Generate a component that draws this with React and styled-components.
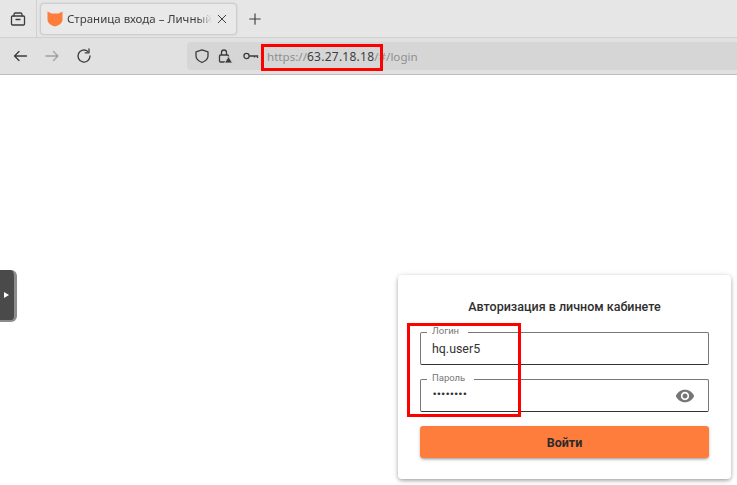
import React from 'react';
import styled, { createGlobalStyle } from 'styled-components';

const GlobalStyle = createGlobalStyle`
	html, body {
		margin: 0;
		padding: 0;
		background: #fff;
		overflow: hidden;
	}
	body {
		font-family: "Noto Sans", sans-serif;
	}
`;

const Page = styled.div`
	position: relative;
	width: 737px;
	height: 485px;
	overflow: hidden;
	display: flex;
	flex-direction: column;
`;

const TabStrip = styled.div`
	height: 38px;
	display: flex;
	align-items: center;
	background: #e6e6e6;
	box-sizing: border-box;
	border-bottom: 1px solid #cfcfcf;
`;

const SideSlot = styled.div`
	width: 37px;
	height: 37px;
	flex: none;
	box-sizing: border-box;
	display: flex;
	align-items: center;
	justify-content: center;
	border-right: 1px solid #cfcfcf;
	color: #3c3c3c;
`;

const Tab = styled.div`
	width: 197px;
	height: 32px;
	margin-left: 3px;
	padding: 0 8px 0 6px;
	box-sizing: border-box;
	display: flex;
	align-items: center;
	gap: 4px;
	background: #e9e9e9;
	border: 1px solid #cdcdcd;
	border-radius: 4px;
	box-shadow: 0 0 2px rgba(0, 0, 0, 0.15);
`;

const TabTitle = styled.span`
	flex: 1;
	font-size: 11.5px;
	color: #3d3d3d;
	white-space: nowrap;
	overflow: hidden;
	-webkit-mask-image: linear-gradient(to right, #000 90%, transparent);
	mask-image: linear-gradient(to right, #000 90%, transparent);
`;

const PlainIcon = styled.span`
	display: flex;
	flex: none;
	margin-left: ${(props) => props.$left || 0}px;
	color: ${(props) => props.$color || '#3c3c3c'};
`;

const Toolbar = styled.div`
	height: 37px;
	display: flex;
	align-items: center;
	background: #e1e1e1;
	box-sizing: border-box;
	border-bottom: 1px solid #bdbdbd;
	padding-left: 12px;
`;

const NavIcons = styled.div`
	width: 175px;
	flex: none;
	display: flex;
	align-items: center;
	gap: 16px;
`;

const UrlBar = styled.div`
	flex: 1;
	height: 28px;
	display: flex;
	align-items: center;
	background: #d6d6d6;
	border-radius: 4px 0 0 4px;
	padding-left: 7px;
`;

const UrlText = styled.span`
	margin-left: 7px;
	font-size: 11.6px;
	color: #8f8f8f;
	white-space: nowrap;
`;

const UrlHost = styled.span`
	font-size: 12px;
	color: #3f3f3f;
	letter-spacing: 0.25px;
`;

const Content = styled.main`
	flex: 1;
	display: flex;
	justify-content: flex-end;
	align-items: flex-start;
	padding: 200px 6px 0 0;
	background: #fff;
`;

const Card = styled.form`
	width: 333px;
	height: 204px;
	box-sizing: border-box;
	padding: 24px 22px 0;
	background: #fff;
	border-radius: 4px;
	box-shadow: 0 2px 4px -1px rgba(0, 0, 0, 0.3), 0 1px 5px rgba(0, 0, 0, 0.14), 0 1px 10px rgba(0, 0, 0, 0.06);
`;

const Title = styled.div`
	font-family: Roboto, sans-serif;
	font-weight: 500;
	font-size: 12.5px;
	line-height: 16px;
	text-align: center;
	color: #2f2f2f;
	margin-bottom: 17px;
`;

const Field = styled.div`
	position: relative;
	height: 33px;
	box-sizing: border-box;
	margin-bottom: 14px;
	padding: 0 13px 0 11px;
	display: flex;
	align-items: center;
	justify-content: space-between;
	border: 1px solid #777;
	border-bottom-color: #333;
	border-radius: 2px;
	font-family: Roboto, sans-serif;
	font-size: 12.4px;
	color: #333;
`;

const Legend = styled.span`
	position: absolute;
	left: 6px;
	top: -8px;
	padding: 0 9px 0 5px;
	background: #fff;
	font-size: 9.5px;
	line-height: 12px;
	color: #777;
`;

const Dots = styled.span`
	font-size: 9px;
	letter-spacing: -1px;
	margin-top: -3px;
	font-family: "DejaVu Sans", sans-serif;
	color: #333;
`;

const SubmitButton = styled.button`
	display: block;
	width: 100%;
	height: 32px;
	border: 0;
	border-radius: 3px;
	background: #ff7d3c;
	box-shadow: 0 2px 3px -1px rgba(0, 0, 0, 0.35), 0 1px 4px rgba(0, 0, 0, 0.12);
	font-family: Roboto, sans-serif;
	font-weight: 700;
	font-size: 12.5px;
	color: #2b2b2b;
`;

const Handle = styled.div`
	position: absolute;
	left: 0;
	top: 270px;
	width: 14px;
	height: 50px;
	display: flex;
	align-items: center;
	background: #4a4a4a;
	border-right: 3px solid #8c8c8c;
	border-bottom: 2px solid #8c8c8c;
	border-radius: 0 6px 6px 0;
`;

const HandleArrow = styled.i`
	width: 0;
	height: 0;
	margin-left: 4px;
	border-left: 5px solid #fff;
	border-top: 3px solid transparent;
	border-bottom: 3px solid transparent;
`;

const Mark = styled.div`
	position: absolute;
	left: ${(props) => props.$x}px;
	top: ${(props) => props.$y}px;
	width: ${(props) => props.$w}px;
	height: ${(props) => props.$h}px;
	box-sizing: border-box;
	border: 3px solid #f00;
	pointer-events: none;
`;

const Stroke = ({ size = 16, children }) => (
	<svg width={size} height={size} viewBox="0 0 16 16" fill="none" stroke="currentColor" strokeWidth="1.3" strokeLinecap="round" strokeLinejoin="round">
		{children}
	</svg>
);

const App = () => (
	<Page>
		<GlobalStyle />
		<TabStrip>
			<SideSlot>
				<Stroke>
					<path d="M4 5V3.500A1.500 1.500 0 0 1 5.500 2h5A1.500 1.500 0 0 1 12 3.500V5" />
					<rect x="1.500" y="5" width="13" height="9" rx="1" />
					<path d="M6 8.500h4" />
				</Stroke>
			</SideSlot>
			<Tab>
				<svg width="16" height="16" viewBox="0 0 16 16" fill="#ff7d3c">
					<path d="M0.500 0.500 L4.500 2.500 H11.500 L15.500 0.500 V8.500 C15.500 12 12 14.500 8 15.500 C4 14.500 0.500 12 0.500 8.500 Z" />
				</svg>
				<TabTitle>Страница входа – Личный кабинет</TabTitle>
				<PlainIcon>
					<Stroke size={12}>
						<path d="M3 3l10 10M13 3L3 13" />
					</Stroke>
				</PlainIcon>
			</Tab>
			<PlainIcon $left={11}>
				<Stroke size={14}>
					<path d="M8 2v12M2 8h12" />
				</Stroke>
			</PlainIcon>
		</TabStrip>
		<Toolbar>
			<NavIcons>
				<PlainIcon>
					<Stroke>
						<path d="M14.500 8H2.500M7 3.500L2.500 8 7 12.500" />
					</Stroke>
				</PlainIcon>
				<PlainIcon $color="#a0a0a0">
					<Stroke>
						<path d="M2 8h12M9.500 3.500L14 8 9.500 12.500" />
					</Stroke>
				</PlainIcon>
				<PlainIcon>
					<Stroke>
						<path d="M14 8A6 6 0 1 1 11.800 3.400" />
						<path d="M13 1v3.800H9.200" />
					</Stroke>
				</PlainIcon>
			</NavIcons>
			<UrlBar>
				<PlainIcon>
					<Stroke>
						<path d="M8 1.800l6 2V8c0 3-2.500 5-6 6.500C4.500 13 2 11 2 8V3.800z" />
					</Stroke>
				</PlainIcon>
				<PlainIcon $left={7}>
					<svg width="16" height="16" viewBox="0 0 16 16" fill="none" stroke="currentColor" strokeWidth="1.3">
						<rect x="2.500" y="7" width="9" height="7" rx="1" />
						<path d="M4.500 7V4.500a2.500 2.500 0 0 1 5 0V7" />
						<path d="M11.500 8.500l4 6.500h-8z" fill="#3c3c3c" stroke="#d6d6d6" strokeWidth="0.8" />
					</svg>
				</PlainIcon>
				<PlainIcon $left={9}>
					<svg width="18" height="16" viewBox="0 0 18 16" fill="none" stroke="currentColor" strokeWidth="1.3">
						<circle cx="4.500" cy="8" r="2.600" />
						<path d="M7.100 8H15.500v2M12.500 8v1.500" />
					</svg>
				</PlainIcon>
				<UrlText>
					https://<UrlHost>63.27.18.18</UrlHost>/#/login
				</UrlText>
			</UrlBar>
		</Toolbar>
		<Content>
			<Card>
				<Title>Авторизация в личном кабинете</Title>
				<Field>
					<Legend>Логин</Legend>
					hq.user5
				</Field>
				<Field>
					<Legend>Пароль</Legend>
					<Dots>••••••••</Dots>
					<svg width="20" height="20" viewBox="0 0 24 24" fill="#757575">
						<path d="M12 4.500C7 4.500 2.730 7.610 1 12c1.730 4.390 6 7.500 11 7.500s9.270-3.110 11-7.500c-1.730-4.390-6-7.500-11-7.500zM12 17c-2.760 0-5-2.240-5-5s2.240-5 5-5 5 2.240 5 5-2.240 5-5 5zm0-8c-1.660 0-3 1.340-3 3s1.340 3 3 3 3-1.340 3-3-1.340-3-3-3z" />
					</svg>
				</Field>
				<SubmitButton type="button">Войти</SubmitButton>
			</Card>
		</Content>
		<Handle>
			<HandleArrow />
		</Handle>
		<Mark $x={261} $y={44} $w={122} $h={27} />
		<Mark $x={407} $y={323} $w={114} $h={94} />
	</Page>
);

export default App;
